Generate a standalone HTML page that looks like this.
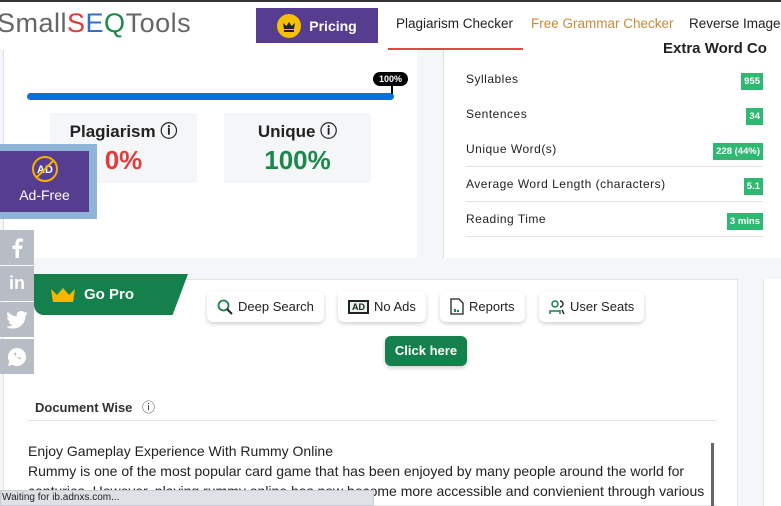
<!DOCTYPE html>
<html><head><meta charset="utf-8"><style>
*{margin:0;padding:0;box-sizing:border-box}
body{width:781px;height:506px;overflow:hidden;background:#f5f6f8;font-family:"Liberation Sans","DejaVu Sans",sans-serif;position:relative;color:#222}
.a{position:absolute}
.hdr{left:0;top:0;width:781px;height:50px;background:#fff;border-top:2px solid #333}
.logo{left:-3px;top:8px;font-size:27px;color:#666;letter-spacing:0.5px}
.pricing{left:256px;top:8px;width:122px;height:35px;background:#563d8f;color:#fff;font-weight:bold;font-size:14px;display:flex;align-items:center;justify-content:center;gap:8px}
.nav{top:16px;font-size:13.5px;color:#222}
.card{background:#fff}
.row{position:absolute;left:466px;width:297px;font-size:12px;letter-spacing:0.5px;color:#222}
.badge{position:absolute;right:0;top:1px;background:#2eb872;color:#fff;font-size:9.5px;font-weight:bold;padding:3px 3px;letter-spacing:0}
.box{background:#f5f6f8;text-align:center}
.pill{top:291px;height:31px;background:#fff;border-radius:6px;box-shadow:0 2px 4px rgba(0,0,0,.18);font-size:13px;display:flex;align-items:center;gap:5px;padding:0 10px;color:#222}
.soc{left:0;width:34px;height:35px;background:#b8bcc4;color:#fff;font-weight:bold;font-size:20px;display:flex;align-items:center;justify-content:center}
</style></head><body>
<div class="a hdr"></div>
<div class="a logo">Small<span style="color:#e23c3c">S</span><span style="color:#2f72c4">E</span><span style="color:#1a8a4a">Q</span>Tools</div>
<div class="a pricing"><span style="width:24px;height:24px;border-radius:50%;background:#f5c000;display:inline-block;position:relative"><svg width="24" height="24" viewBox="0 0 24 24"><path d="M7 15l-1-6 3.5 3L12 8l2.5 4L18 9l-1 6z" fill="#222"/><rect x="7" y="16" width="10" height="2" fill="#222"/></svg></span>Pricing</div>
<div class="a nav" style="left:396px">Plagiarism Checker</div>
<div class="a" style="left:388px;top:48px;width:135px;height:2px;background:#e04848"></div>
<div class="a nav" style="left:531px;color:#c98a3a">Free Grammar Checker</div>
<div class="a nav" style="left:689px">Reverse Image</div>

<div class="a card" style="left:3px;top:50px;width:414px;height:208px;border-left:1px solid #dde"></div>
<div class="a card" style="left:443px;top:50px;width:338px;height:208px;border-left:1px solid #dde"></div>
<div class="a" style="left:663px;top:40px;font-size:15px;font-weight:bold;color:#222">Extra Word Co</div>

<div class="a" style="left:27px;top:93px;width:367px;height:7px;background:#0a6fe0;border-radius:4px"></div>
<div class="a" style="left:373px;top:72px;width:35px;height:14px;background:#000;color:#fff;font-size:9px;font-weight:bold;border-radius:7px;text-align:center;line-height:14px">100%</div>
<div class="a" style="left:391px;top:85px;width:2px;height:9px;background:#000"></div>

<div class="a box" style="left:50px;top:113px;width:147px;height:70px"><div style="margin-top:4px;font-size:17px;font-weight:bold">Plagiarism ⓘ</div><div style="font-size:26px;color:#e23c3c;margin-top:3px;font-weight:bold">0%</div></div>
<div class="a box" style="left:224px;top:113px;width:147px;height:70px"><div style="margin-top:4px;font-size:17px;font-weight:bold">Unique ⓘ</div><div style="font-size:26px;color:#1a8a4a;margin-top:3px;font-weight:bold">100%</div></div>

<div class="a" style="left:0;top:144px;width:97px;height:75px;background:#8fb4d8"></div>
<div class="a" style="left:0;top:151px;width:89px;height:61px;background:#563d8f;color:#fff;text-align:center">
<svg width="32" height="30" viewBox="0 0 32 30" style="margin-top:3px"><circle cx="16" cy="15" r="12" fill="none" stroke="#f5b000" stroke-width="2"/><text x="16" y="19" text-anchor="middle" font-size="11" font-family="Liberation Sans" fill="#fff" font-weight="bold">AD</text><line x1="7" y1="24" x2="25" y2="6" stroke="#f5b000" stroke-width="2"/></svg>
<div style="font-size:14px;margin-top:-2px">Ad-Free</div></div>

<div class="a row" style="top:72px">Syllables<span class="badge">955</span></div>
<div class="a row" style="top:107px">Sentences<span class="badge">34</span></div>
<div class="a row" style="top:142px;height:25px;border-bottom:1px solid #e3e4ea">Unique Word(s)<span class="badge">228 (44%)</span></div>
<div class="a row" style="top:177px;height:25px;border-bottom:1px solid #e3e4ea">Average Word Length (characters)<span class="badge">5.1</span></div>
<div class="a row" style="top:212px;height:25px;border-bottom:1px solid #e3e4ea">Reading Time<span class="badge">3 mins</span></div>

<div class="a card" style="left:3px;top:279px;width:735px;height:227px;border:1px solid #e3e4ea"></div>
<div class="a card" style="left:763px;top:279px;width:18px;height:227px;border-left:1px solid #e3e4ea"></div>
<div class="a" style="left:34px;top:274px;width:154px;height:41px;background:#14814d;border-radius:0 0 10px 10px;clip-path:polygon(0 0,100% 0,90% 100%,0 100%)"></div>
<div class="a" style="left:50px;top:286px;color:#fff;font-size:15px;font-weight:bold;display:flex;gap:8px;align-items:center"><svg width="26" height="16" viewBox="0 0 26 16"><path d="M1 2l6 6 6-7 6 7 6-6-2 13H3z" fill="#f5b800"/></svg>Go Pro</div>

<div class="a pill" style="left:207px"><svg width="16" height="16" viewBox="0 0 16 16"><circle cx="6.5" cy="6.5" r="5" fill="none" stroke="#14814d" stroke-width="1.8"/><line x1="10" y1="10" x2="15" y2="15" stroke="#222" stroke-width="2"/></svg>Deep Search</div>
<div class="a pill" style="left:338px"><span style="border:2px solid #222;font-size:9px;font-weight:bold;padding:0 2px;background:#e6f3ea">AD</span>No Ads</div>
<div class="a pill" style="left:440px"><svg width="14" height="17" viewBox="0 0 14 17"><path d="M1 1h8l4 4v11H1z" fill="none" stroke="#222" stroke-width="1.3"/><rect x="4" y="11" width="2" height="3" fill="#14814d"/><rect x="7" y="12" width="2" height="2" fill="#14814d"/></svg>Reports</div>
<div class="a pill" style="left:539px"><svg width="16" height="16" viewBox="0 0 16 16"><circle cx="6" cy="5" r="3" fill="none" stroke="#14814d" stroke-width="1.5"/><path d="M1 15v-3h10v3" fill="none" stroke="#14814d" stroke-width="1.5"/><path d="M11 2a3 3 0 010 6M13 11l2 4" fill="none" stroke="#222" stroke-width="1.4"/></svg>User Seats</div>
<div class="a" style="left:385px;top:336px;width:82px;height:30px;background:#14814d;color:#fff;border-radius:6px;font-size:13px;font-weight:bold;text-align:center;line-height:30px;box-shadow:0 2px 4px rgba(0,0,0,.2)">Click here</div>

<div class="a" style="left:35px;top:397px;font-size:13px;font-weight:bold;color:#333">Document Wise <span style="font-weight:normal;margin-left:6px">ⓘ</span></div>
<div class="a" style="left:27px;top:420px;width:690px;height:1px;background:#e3e4ea"></div>
<div class="a" style="left:28px;top:441px;font-size:14px;color:#222;line-height:20px;width:690px;white-space:nowrap">Enjoy Gameplay Experience With Rummy Online<br>Rummy is one of the most popular card game that has been enjoyed by many people around the world for<br>centuries. However, playing rummy online has now become more accessible and convienient through various</div>
<div class="a" style="left:711px;top:443px;width:3px;height:63px;background:#666"></div>
<div class="a" style="left:717px;top:421px;width:20px;height:85px;background:#fff"></div>

<div class="a soc" style="top:230px"><svg width="14" height="20" viewBox="0 0 14 20"><path d="M9 20v-9h3l.5-3.5H9V5.5c0-1 .3-1.7 1.8-1.7H13V.6C12.6.5 11.4.4 10.1.4 7.3.4 5.5 2 5.5 5v2.5H2.5V11h3v9z" fill="#fff"/></svg></div>
<div class="a soc" style="top:266px;font-size:18px">in</div>
<div class="a soc" style="top:302px"><svg width="22" height="18" viewBox="0 0 24 20"><path d="M24 2.4a10 10 0 01-2.8.8A5 5 0 0023.3.4a10 10 0 01-3.1 1.2A4.9 4.9 0 0011.8 6 14 14 0 011.7.9a4.9 4.9 0 001.500 6.6A4.9 4.9 0 011 6.9a4.9 4.9 0 003.9 4.9 5 5 0 01-2.2.1 4.9 4.9 0 004.6 3.4A9.9 9.9 0 010 17.3 14 14 0 007.5 19.5c9 0 14-7.5 14-14v-.6A10 10 0 0024 2.4z" fill="#fff"/></svg></div>
<div class="a soc" style="top:339px"><svg width="20" height="20" viewBox="0 0 20 20"><path d="M10 1a9 9 0 00-7.7 13.6L1 19l4.5-1.2A9 9 0 1010 1z" fill="#fff"/><path d="M7 6c.5 2.5 2.5 5 6 6.5l1-1.5-2-1-1 1c-1-.5-2-1.5-2.5-2.5l1-1-1-2z" fill="#b8bcc4"/></svg></div>

<div class="a" style="left:0;top:490px;width:374px;height:16px;background:#dee1e6;border:1px solid #c8ccd2;font-size:10px;color:#222;line-height:14px;padding-left:1px">Waiting for ib.adnxs.com...</div>
</body></html>
